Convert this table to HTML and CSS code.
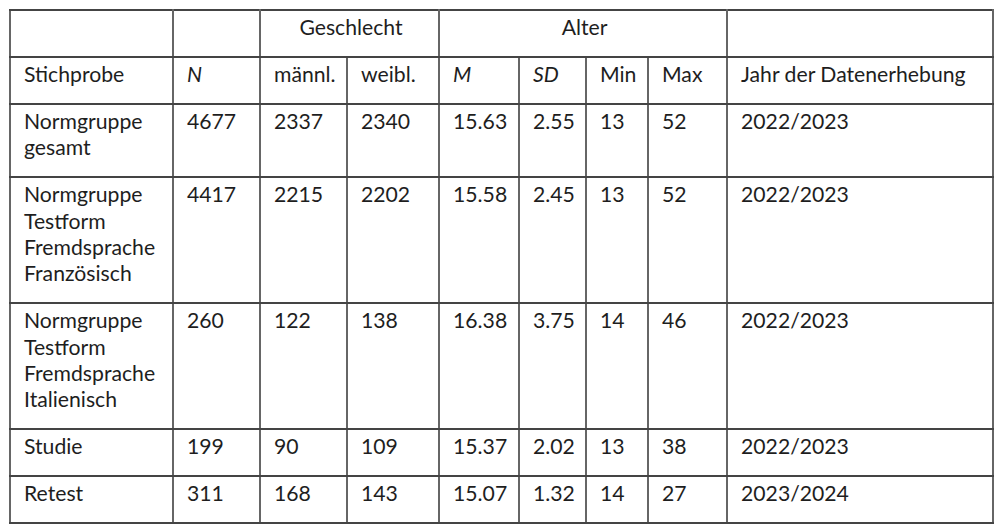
FILE: index.html
```html
<!DOCTYPE html>
<html lang="de">
<head>
<meta charset="utf-8">
<link rel="stylesheet" href="styles.css">
</head>
<body>
<div class="page">
<table class="data">
<colgroup>
<col class="c1"><col class="c2"><col class="c3"><col class="c4"><col class="c5"><col class="c6"><col class="c7"><col class="c8"><col class="c9">
</colgroup>
<tr>
<td></td><td></td><td colspan="2" class="center">Geschlecht</td><td colspan="4" class="center">Alter</td><td></td>
</tr>
<tr>
<td>Stichprobe</td><td><i>N</i></td><td>männl.</td><td>weibl.</td><td><i>M</i></td><td><i>SD</i></td><td>Min</td><td>Max</td><td>Jahr der Datenerhebung</td>
</tr>
<tr>
<td>Normgruppe<br>gesamt</td><td>4677</td><td>2337</td><td>2340</td><td>15.63</td><td>2.55</td><td>13</td><td>52</td><td>2022/2023</td>
</tr>
<tr>
<td>Normgruppe<br>Testform<br>Fremdsprache<br>Französisch</td><td>4417</td><td>2215</td><td>2202</td><td>15.58</td><td>2.45</td><td>13</td><td>52</td><td>2022/2023</td>
</tr>
<tr>
<td>Normgruppe<br>Testform<br>Fremdsprache<br>Italienisch</td><td>260</td><td>122</td><td>138</td><td>16.38</td><td>3.75</td><td>14</td><td>46</td><td>2022/2023</td>
</tr>
<tr>
<td>Studie</td><td>199</td><td>90</td><td>109</td><td>15.37</td><td>2.02</td><td>13</td><td>38</td><td>2022/2023</td>
</tr>
<tr>
<td>Retest</td><td>311</td><td>168</td><td>143</td><td>15.07</td><td>1.32</td><td>14</td><td>27</td><td>2023/2024</td>
</tr>
</table>
</div>
</body>
</html>
```

FILE: styles.css
```css
html, body {
  margin: 0;
  padding: 0;
  background: #ffffff;
}
.page {
  padding: 9px 0 0 9px;
}
.data {
  border-collapse: collapse;
  table-layout: fixed;
  width: 983px;
  font-family: Lato, "Liberation Sans", sans-serif;
  font-size: 21.2px;
  line-height: 26.4px;
  color: #1e1e1e;
}
.data td {
  border-top: 2px solid #444444;
  border-bottom: 2px solid #444444;
  border-left: 2px solid #666666;
  border-right: 2px solid #666666;
  padding: 3px 10px 15.5px 13px;
  vertical-align: top;
  text-align: left;
  white-space: nowrap;
  overflow: visible;
}
.data td.center {
  text-align: center;
}
.data i {
  font-style: italic;
}
.c1 { width: 163px; }
.c2 { width: 87px; }
.c3 { width: 87px; }
.c4 { width: 92px; }
.c5 { width: 80px; }
.c6 { width: 67px; }
.c7 { width: 62px; }
.c8 { width: 79px; }
.c9 { width: 266px; }
```
